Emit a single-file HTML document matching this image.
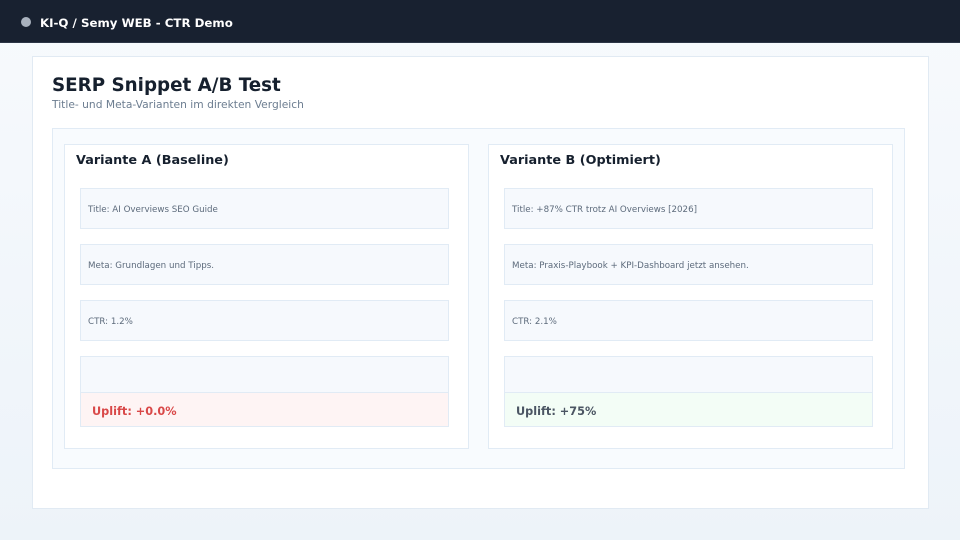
<!DOCTYPE html><html><head><style>
*{margin:0;padding:0;box-sizing:border-box}
body{width:960px;height:540px;background:linear-gradient(#f7fafd,#edf3f9);font-family:"DejaVu Sans","Liberation Sans",sans-serif;position:relative;overflow:hidden}
.a{position:absolute}
.hdr{left:0;top:0;width:960px;height:43px;background:#182130;border-bottom:1px solid #2c3646}
.dot{left:21px;top:17px;width:10px;height:10px;border-radius:50%;background:#a9b2be}
.ht{left:40px;top:16px;color:#fff;font-weight:bold;font-size:11.8px}
.card{left:32px;top:56px;width:897px;height:453px;background:#fff;border:1px solid #e1eaf3}
.h1{left:52px;top:75px;font-size:18.3px;font-weight:bold;color:#16202e}
.sub{left:52px;top:98px;font-size:10.7px;color:#6c7d90}
.panel{left:52px;top:128px;width:853px;height:341px;background:#f8fbfe;border:1px solid #e1ebf5}
.v{width:405px;height:305px;top:144px;background:#fff;border:1px solid #e1ebf5}
.vt{font-size:12.8px;font-weight:bold;color:#16202e;top:153px}
.row{width:369px;background:#f6f9fd;border:1px solid #e1ebf5;font-size:8.7px;color:#5d6b7c;padding-left:7px;padding-top:2px;display:flex;align-items:center}
.up{width:369px;height:35px;top:392px;border:1px solid #e1ebf5;font-size:11.3px;font-weight:bold;padding-left:11px;padding-top:3px;display:flex;align-items:center}
</style></head><body>
<div class="a hdr"></div><div class="a dot"></div><div class="a ht">KI-Q / Semy WEB - CTR Demo</div>
<div class="a card"></div>
<div class="a h1">SERP Snippet A/B Test</div>
<div class="a sub">Title- und Meta-Varianten im direkten Vergleich</div>
<div class="a panel"></div>
<div class="a v" style="left:64px"></div><div class="a v" style="left:488px"></div>
<div class="a vt" style="left:76px">Variante A (Baseline)</div>
<div class="a vt" style="left:500px">Variante B (Optimiert)</div>
<div class="a row" style="left:80px;top:188px;height:41px">Title: AI Overviews SEO Guide</div>
<div class="a row" style="left:80px;top:244px;height:41px">Meta: Grundlagen und Tipps.</div>
<div class="a row" style="left:80px;top:300px;height:41px">CTR: 1.2%</div>
<div class="a row" style="left:80px;top:356px;height:37px"></div>
<div class="a up" style="left:80px;background:#fef4f4;color:#d94848">Uplift: +0.0%</div>
<div class="a row" style="left:504px;top:188px;height:41px">Title: +87% CTR trotz AI Overviews [2026]</div>
<div class="a row" style="left:504px;top:244px;height:41px">Meta: Praxis-Playbook + KPI-Dashboard jetzt ansehen.</div>
<div class="a row" style="left:504px;top:300px;height:41px">CTR: 2.1%</div>
<div class="a row" style="left:504px;top:356px;height:37px"></div>
<div class="a up" style="left:504px;background:#f3fdf6;color:#4b5563">Uplift: +75%</div>
</body></html>
